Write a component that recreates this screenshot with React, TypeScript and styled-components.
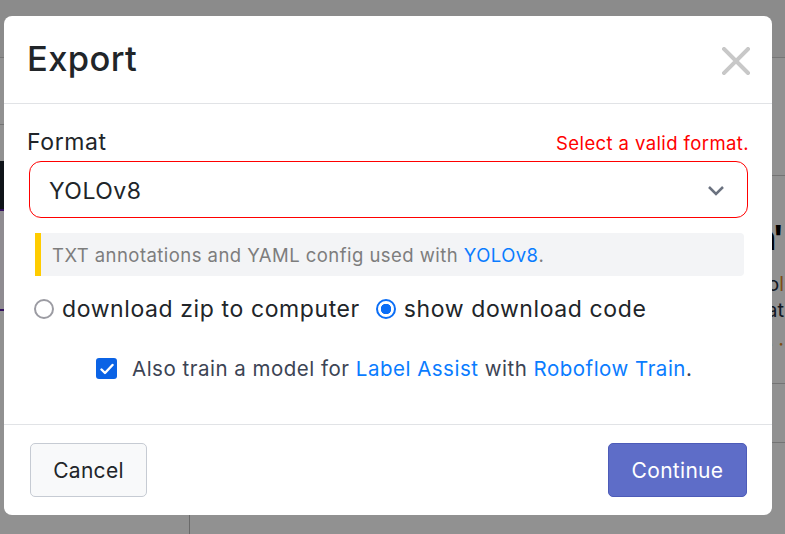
import React from "react";
import styled, { createGlobalStyle } from "styled-components";

const Global = createGlobalStyle`
  html, body { margin: 0; padding: 0; }
  body { font-family: Inter, "Noto Sans", "Liberation Sans", sans-serif; background: #fff; }
  * { box-sizing: border-box; }
`;

const Page = styled.div`
  position: relative;
  width: 785px;
  height: 534px;
  overflow: hidden;
`;

/* ---------- background page (under the overlay) ---------- */
const BgPage = styled.div`
  display: flex;
  flex-direction: column;
  width: 100%;
  height: 100%;
  background: #fff;
`;
const BgHeader = styled.div`
  height: 58px;
  flex: none;
  background: #f4f4f4;
  border-bottom: 1px solid #cfcfcf;
`;
const BgBody = styled.div`
  flex: 1;
  display: flex;
`;
const BgSidebar = styled.div`
  width: 190px;
  flex: none;
  border-right: 1px solid #bbb;
  display: flex;
  flex-direction: column;
`;
const BgSideItem = styled.div`
  height: 67px;
  padding: 22px 0 0 0;
  font-size: 22px;
  color: #222;
  text-align: right;
  border-bottom: 1px solid #ccc;
`;
const BgDark = styled.div`
  margin-top: 36px;
  height: 50px;
  background: #1b242d;
  border-bottom: 2px solid #5a1fa8;
`;
const BgLight = styled.div`
  height: 100px;
  background: #fbf6ff;
  border-bottom: 2px solid #5a1fa8;
`;
const BgMain = styled.div`
  flex: 1;
  display: flex;
  flex-direction: column;
  align-items: flex-end;
`;
const BgRow = styled.div<{ $h: number }>`
  width: 100%;
  height: ${(p) => p.$h}px;
  flex: none;
  border-bottom: 1px solid #ccc;
`;
const BgText = styled.div`
  width: 100%;
  height: 208px;
  flex: none;
  padding: 42px 1px 0 0;
  display: flex;
  flex-direction: column;
  align-items: flex-end;
  border-bottom: 1px solid #ccc;
`;
const BgHeading = styled.div`
  font-size: 34px;
  font-weight: 700;
  color: #000;
  line-height: 40px;
  letter-spacing: -3px;
  padding-right: 3px;
`;
const BgLine = styled.div<{ $mt: number }>`
  font-size: 20px;
  color: #1f2d3d;
  line-height: 26px;
  margin-top: ${(p) => p.$mt}px;
  span { color: #e08a2a; }
`;

const Overlay = styled.div`
  position: absolute;
  inset: 0;
  background: rgba(0, 0, 0, 0.43);
  display: flex;
  align-items: flex-start;
  padding: 16px 0 0 4px;
`;

/* ---------- modal ---------- */
const Modal = styled.div`
  width: 768px;
  height: 499px;
  background: #fff;
  border-radius: 8px;
  display: flex;
  flex-direction: column;
  overflow: hidden;
`;
const Header = styled.div`
  height: 88px;
  flex: none;
  display: flex;
  align-items: center;
  justify-content: space-between;
  padding: 0 22px 0 23px;
  border-bottom: 1px solid #e1e3e6;
`;
const Title = styled.h5`
  margin: 0 0 2px 0;
  font-size: 34.5px;
  font-weight: 500;
  color: #212529;
  letter-spacing: 0.4px;
`;
const CloseBtn = styled.button`
  border: 0;
  background: transparent;
  padding: 0;
  width: 28px;
  height: 28px;
  display: flex;
  margin-top: 2px;
  cursor: pointer;
`;
const Body = styled.div`
  flex: 1;
  padding: 24px 24px 0 23px;
  display: flex;
  flex-direction: column;
`;
const LabelRow = styled.div`
  display: flex;
  justify-content: space-between;
  align-items: baseline;
`;
const Label = styled.label`
  font-size: 23px;
  letter-spacing: 0.6px;
  color: #212529;
  line-height: 28px;
`;
const ErrorText = styled.span`
  font-size: 18.5px;
  letter-spacing: 0.4px;
  color: #f00;
  margin-right: -1px;
`;
const Select = styled.div`
  margin: 5px 0 0 2px;
  height: 57px;
  border: 1px solid #f00;
  border-radius: 12px;
  display: flex;
  align-items: center;
  justify-content: space-between;
  padding: 2px 22px 0 19px;
  font-size: 23px;
  letter-spacing: 0.5px;
  color: #212529;
`;
const Info = styled.div`
  margin: 15px 4px 0 8px;
  height: 43px;
  background: #f3f4f6;
  border-left: 6px solid #ffcc00;
  border-radius: 0 4px 4px 0;
  display: flex;
  align-items: center;
  padding: 1px 0 0 11px;
  font-size: 18.5px;
  letter-spacing: 0.45px;
  color: #7d7d7d;
`;
const Link = styled.a`
  color: #0a7cff;
  text-decoration: none;
`;
const RadioRow = styled.div`
  display: flex;
  align-items: center;
  margin: 19px 0 0 7px;
  gap: 16px;
`;
const RadioOption = styled.label`
  display: flex;
  align-items: center;
  gap: 8px;
  font-size: 23px;
  letter-spacing: 0.6px;
  color: #212529;
`;
const RadioDot = styled.span<{ $checked?: boolean }>`
  width: 20px;
  height: 20px;
  border-radius: 50%;
  flex: none;
  border: ${(p) => (p.$checked ? "2.5px solid #0b6ef6" : "2.5px solid #9c9ca3")};
  background: ${(p) => (p.$checked ? "radial-gradient(circle, #0b6ef6 0 5px, #fff 5.5px)" : "#fff")};
`;
const CheckRow = styled.div`
  display: flex;
  align-items: center;
  margin: 33px 0 0 69px;
  gap: 15px;
  font-size: 20.5px;
  letter-spacing: 0.5px;
  color: #3c4454;
`;
const CheckBox = styled.span`
  width: 21px;
  height: 21px;
  border-radius: 3px;
  background: #0b63e5;
  display: flex;
  align-items: center;
  justify-content: center;
  flex: none;
`;
const Footer = styled.div`
  height: 91px;
  flex: none;
  border-top: 1px solid #e1e3e6;
  display: flex;
  align-items: center;
  justify-content: space-between;
  padding: 0 25px 0 26px;
`;
const Button = styled.button<{ $primary?: boolean }>`
  height: 54px;
  padding: 0;
  border-radius: 5px;
  font-family: inherit;
  font-size: 21px;
  letter-spacing: 0.3px;
  border: 1px solid ${(p) => (p.$primary ? "#4d5bb8" : "#c6cbd3")};
  background: ${(p) => (p.$primary ? "#5e6dc8" : "#f8f9fa")};
  color: ${(p) => (p.$primary ? "#fff" : "#212529")};
  width: ${(p) => (p.$primary ? "139px" : "117px")};
  cursor: pointer;
`;

export default function App() {
  return (
    <Page>
      <Global />
      <BgPage>
        <BgHeader />
        <BgBody>
          <BgSidebar>
            <BgSideItem>e</BgSideItem>
            <BgDark />
            <BgLight />
          </BgSidebar>
          <BgMain>
            <BgRow $h={118} />
            <BgText>
              <BgHeading>n'</BgHeading>
              <BgLine $mt={13}>o<span>l</span></BgLine>
              <BgLine $mt={0}>at</BgLine>
              <BgLine $mt={8}>e <span>·</span></BgLine>
            </BgText>
            <BgRow $h={59} />
          </BgMain>
        </BgBody>
      </BgPage>
      <Overlay>
        <Modal>
          <Header>
            <Title>Export</Title>
            <CloseBtn aria-label="Close">
              <svg width="28" height="28" viewBox="0 0 28 28">
                <path d="M2 2 L26 26 M26 2 L2 26" stroke="#c8c8c8" strokeWidth="4" strokeLinecap="square" />
              </svg>
            </CloseBtn>
          </Header>
          <Body>
            <LabelRow>
              <Label>Format</Label>
              <ErrorText>Select a valid format.</ErrorText>
            </LabelRow>
            <Select>
              <span>YOLOv8</span>
              <svg width="18" height="12" viewBox="0 0 18 12">
                <path d="M2 2 L9 9 L16 2" fill="none" stroke="#6b7280" strokeWidth="2.5" />
              </svg>
            </Select>
            <Info>
              TXT annotations and YAML config used with&nbsp;<Link>YOLOv8</Link>.
            </Info>
            <RadioRow>
              <RadioOption>
                <RadioDot />
                download zip to computer
              </RadioOption>
              <RadioOption>
                <RadioDot $checked />
                show download code
              </RadioOption>
            </RadioRow>
            <CheckRow>
              <CheckBox>
                <svg width="14" height="12" viewBox="0 0 14 12">
                  <path d="M1.5 6.5 L5 10 L12.5 2" fill="none" stroke="#fff" strokeWidth="2.4" strokeLinecap="round" strokeLinejoin="round" />
                </svg>
              </CheckBox>
              <span>
                Also train a model for <Link>Label Assist</Link> with <Link>Roboflow Train</Link>.
              </span>
            </CheckRow>
          </Body>
          <Footer>
            <Button>Cancel</Button>
            <Button $primary>Continue</Button>
          </Footer>
        </Modal>
      </Overlay>
    </Page>
  );
}
